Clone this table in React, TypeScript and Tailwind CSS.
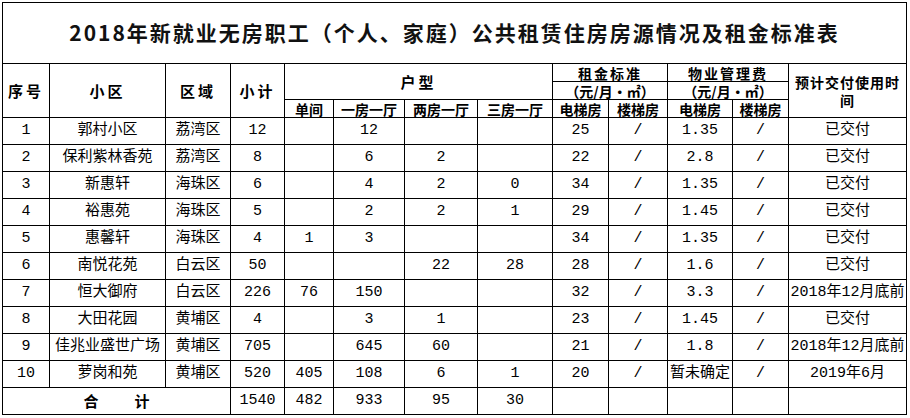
import React from "react";

type Row = {
  no: string;
  name: string;
  area: string;
  total: string;
  types: string[];
  rentLift: string;
  rentStair: string;
  feeLift: string;
  feeStair: string;
  delivery: string;
};

const rows: Row[] = [
  { no: "1", name: "郭村小区", area: "荔湾区", total: "12", types: ["", "12", "", ""], rentLift: "25", rentStair: "/", feeLift: "1.35", feeStair: "/", delivery: "已交付" },
  { no: "2", name: "保利紫林香苑", area: "荔湾区", total: "8", types: ["", "6", "2", ""], rentLift: "22", rentStair: "/", feeLift: "2.8", feeStair: "/", delivery: "已交付" },
  { no: "3", name: "新惠轩", area: "海珠区", total: "6", types: ["", "4", "2", "0"], rentLift: "34", rentStair: "/", feeLift: "1.35", feeStair: "/", delivery: "已交付" },
  { no: "4", name: "裕惠苑", area: "海珠区", total: "5", types: ["", "2", "2", "1"], rentLift: "29", rentStair: "/", feeLift: "1.45", feeStair: "/", delivery: "已交付" },
  { no: "5", name: "惠馨轩", area: "海珠区", total: "4", types: ["1", "3", "", ""], rentLift: "34", rentStair: "/", feeLift: "1.35", feeStair: "/", delivery: "已交付" },
  { no: "6", name: "南悦花苑", area: "白云区", total: "50", types: ["", "", "22", "28"], rentLift: "28", rentStair: "/", feeLift: "1.6", feeStair: "/", delivery: "已交付" },
  { no: "7", name: "恒大御府", area: "白云区", total: "226", types: ["76", "150", "", ""], rentLift: "32", rentStair: "/", feeLift: "3.3", feeStair: "/", delivery: "2018年12月底前" },
  { no: "8", name: "大田花园", area: "黄埔区", total: "4", types: ["", "3", "1", ""], rentLift: "23", rentStair: "/", feeLift: "1.45", feeStair: "/", delivery: "已交付" },
  { no: "9", name: "佳兆业盛世广场", area: "黄埔区", total: "705", types: ["", "645", "60", ""], rentLift: "21", rentStair: "/", feeLift: "1.8", feeStair: "/", delivery: "2018年12月底前" },
  { no: "10", name: "萝岗和苑", area: "黄埔区", total: "520", types: ["405", "108", "6", "1"], rentLift: "20", rentStair: "/", feeLift: "暂未确定", feeStair: "/", delivery: "2019年6月" },
];

const widths = [47, 116, 65, 54, 49, 71, 73, 75, 56, 59, 65, 56, 118];

const hd = "border border-black p-0 text-center align-middle font-bold text-[14px] leading-[16px] font-['Noto_Sans_CJK_SC',sans-serif]";
const th = hd + " whitespace-nowrap";
const td = "border border-black p-0 text-center align-middle text-[15px] leading-[18px] h-[27px] whitespace-nowrap";

export default function App() {
  return (
    <div className="bg-white w-[910px] h-[418px] overflow-hidden pl-[2px] pt-[2px] text-black font-['Liberation_Mono','Noto_Sans_CJK_SC',monospace]">
      <table className="table-fixed border-collapse w-[905px]">
        <colgroup>
          {widths.map((w, i) => (
            <col key={i} style={{ width: w }} />
          ))}
        </colgroup>
        <tbody>
          <tr>
            <td
              colSpan={13}
              className="border border-black p-0 h-[61px] text-center align-middle font-bold text-[21px] tracking-[2px] text-[#111] font-['Noto_Sans_CJK_SC',sans-serif]"
            >
              2018年新就业无房职工（个人、家庭）公共租赁住房房源情况及租金标准表
            </td>
          </tr>
          <tr className="h-[18px]">
            <th rowSpan={3} className={th + " text-[15px] tracking-[3px]"}>序号</th>
            <th rowSpan={3} className={th + " text-[15px] tracking-[3px]"}>小区</th>
            <th rowSpan={3} className={th + " text-[15px] tracking-[3px]"}>区域</th>
            <th rowSpan={3} className={th + " text-[15px] tracking-[3px]"}>小计</th>
            <th colSpan={4} rowSpan={2} className={th + " text-[15px] tracking-[3px]"}>户型</th>
            <th colSpan={2} className={th + " tracking-[2px]"}>租金标准</th>
            <th colSpan={2} className={th + " tracking-[2px]"}>物业管理费</th>
            <th rowSpan={3} className={hd + " whitespace-normal px-[4px] tracking-[1px] leading-[18px]"}>预计交付使用时间</th>
          </tr>
          <tr className="h-[18px]">
            <th colSpan={2} className={th}>（元/月·㎡）</th>
            <th colSpan={2} className={th}>（元/月·㎡）</th>
          </tr>
          <tr className="h-[18px]">
            <th className={th}>单间</th>
            <th className={th}>一房一厅</th>
            <th className={th}>两房一厅</th>
            <th className={th}>三房一厅</th>
            <th className={th}>电梯房</th>
            <th className={th}>楼梯房</th>
            <th className={th}>电梯房</th>
            <th className={th}>楼梯房</th>
          </tr>
          {rows.map((r) => (
            <tr key={r.no}>
              <td className={td}>{r.no}</td>
              <td className={td}>{r.name}</td>
              <td className={td}>{r.area}</td>
              <td className={td}>{r.total}</td>
              {r.types.map((t, i) => (
                <td key={i} className={td}>{t}</td>
              ))}
              <td className={td}>{r.rentLift}</td>
              <td className={td}>{r.rentStair}</td>
              <td className={td}>{r.feeLift}</td>
              <td className={td}>{r.feeStair}</td>
              <td className={td}>{r.delivery}</td>
            </tr>
          ))}
          <tr>
            <td colSpan={3} className={td + " font-bold font-['Noto_Sans_CJK_SC',sans-serif]"}>
              <span className="inline-flex gap-[36px]">
                <span>合</span>
                <span>计</span>
              </span>
            </td>
            <td className={td}>1540</td>
            <td className={td}>482</td>
            <td className={td}>933</td>
            <td className={td}>95</td>
            <td className={td}>30</td>
            <td className={td}></td>
            <td className={td}></td>
            <td className={td}></td>
            <td className={td}></td>
            <td className={td}></td>
          </tr>
        </tbody>
      </table>
    </div>
  );
}
